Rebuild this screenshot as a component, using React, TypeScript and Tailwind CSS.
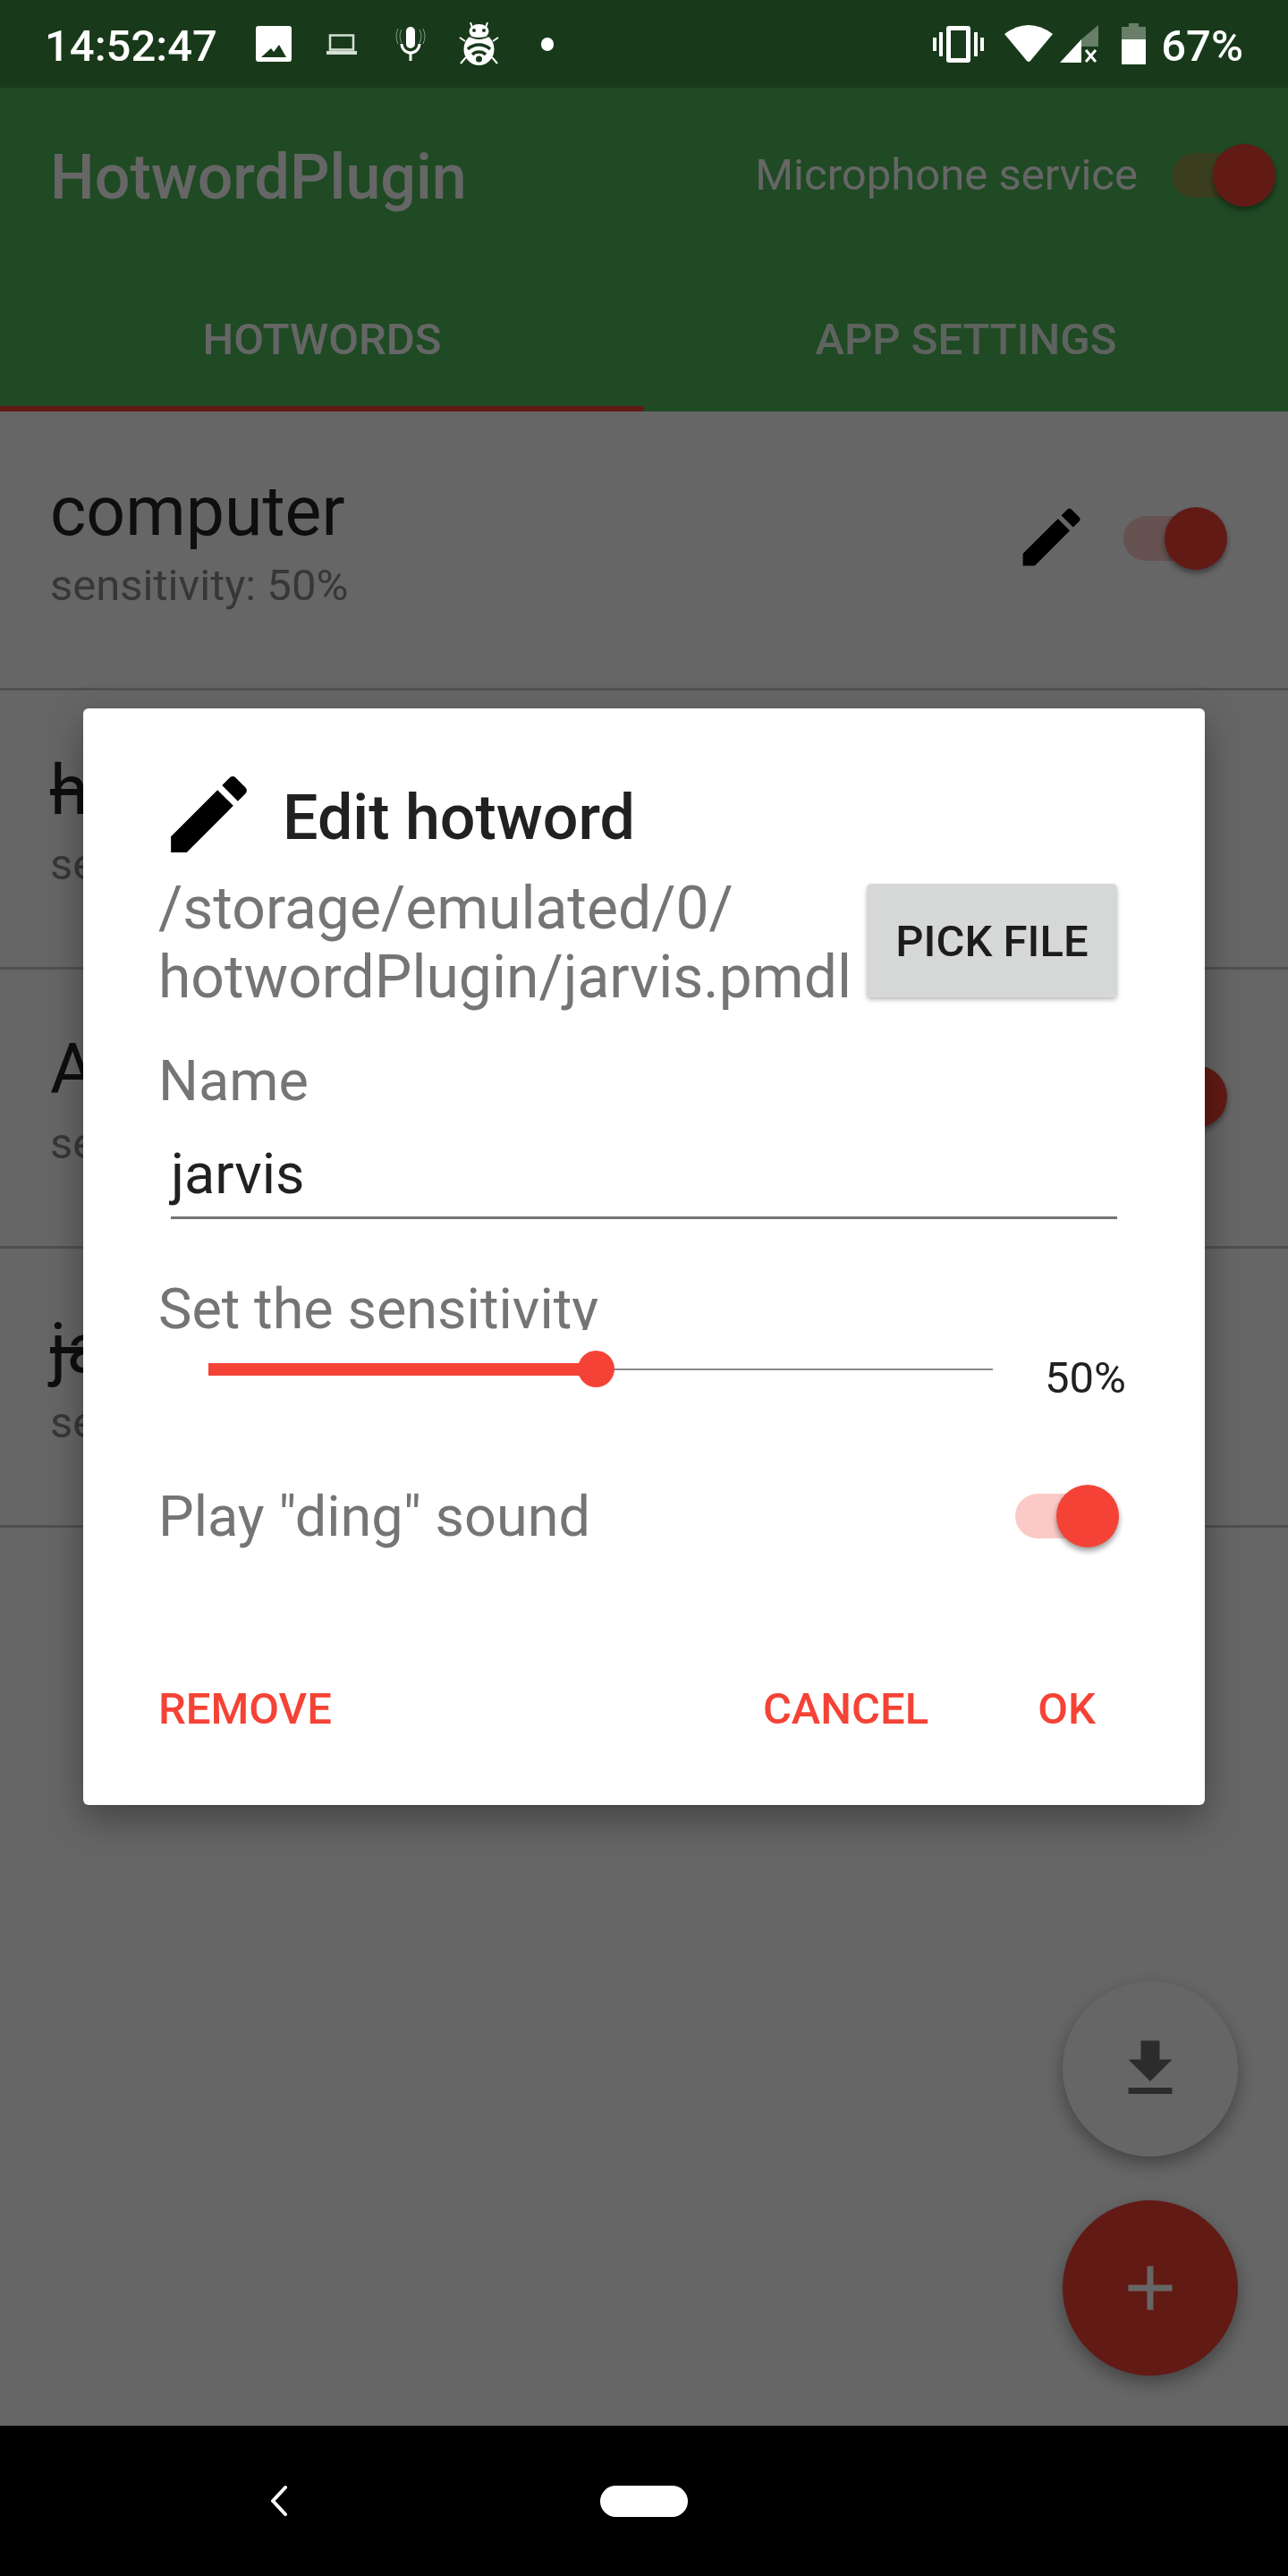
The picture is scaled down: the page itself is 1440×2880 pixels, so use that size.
import React from "react";

const font = { fontFamily: "Roboto, sans-serif" };

function Pencil({ className }: { className?: string }) {
  return (
    <svg viewBox="0 0 24 24" className={className} fill="currentColor">
      <path d="M3 17.25V21h3.75L17.81 9.94l-3.75-3.75L3 17.25zM20.71 7.04a1 1 0 0 0 0-1.41l-2.34-2.34a1 1 0 0 0-1.41 0l-1.83 1.83 3.75 3.75 1.83-1.83z" />
    </svg>
  );
}

function Toggle({ track, thumb, className }: { track: string; thumb: string; className?: string }) {
  return (
    <div className={`relative w-[116px] h-[70px] shrink-0 ${className ?? ""}`}>
      <div className={`absolute left-0 top-[10px] w-[90px] h-[50px] rounded-full ${track}`} />
      <div className={`absolute left-[46px] top-0 w-[70px] h-[70px] rounded-full shadow-[0_4px_6px_rgba(0,0,0,0.4)] ${thumb}`} />
    </div>
  );
}

function Row({ name, struck, on }: { name: string; struck?: boolean; on?: boolean }) {
  return (
    <div className="h-[312px] shrink-0 border-b-[3px] border-[#c8c8c8] flex items-start justify-between pl-[56px] pr-[68px]">
      <div className="pt-[67px]">
        <div className={`text-[77px] leading-[90px] text-[#252525] ${struck ? "line-through" : ""}`}>{name}</div>
        <div className="text-[49px] leading-[60px] mt-[8px] text-[#8a8a8a]">sensitivity: 50%</div>
      </div>
      <div className="flex items-center gap-[38px] pt-[98px]">
        <Pencil className="w-[85px] h-[85px] text-black" />
        {on ? <Toggle track="bg-[#fccdca]" thumb="bg-[#f44336]" className="mt-[2px]" /> : <div className="w-[116px]" />}
      </div>
    </div>
  );
}

export default function App() {
  return (
    <div className="relative w-[1440px] h-[2880px] flex flex-col overflow-hidden bg-white" style={font}>
      <div className="h-[98px] shrink-0 bg-[#183a1a] text-white flex items-center pl-[50px] pr-[50px] relative z-20">
        <span className="text-[49px] font-medium pt-[6px]">14:52:47</span>
        <svg viewBox="0 0 40 40" className="w-[40px] h-[40px] ml-[43px]" fill="#fff"><path fillRule="evenodd" d="M3 0h34a3 3 0 0 1 3 3v34a3 3 0 0 1-3 3H3a3 3 0 0 1-3-3V3a3 3 0 0 1 3-3zM6 35h28L26 21l-6 8-3-4z" /></svg>
        <svg viewBox="0 0 34 23" className="w-[34px] h-[23px] ml-[39px]" fill="none" stroke="#d5e0d5" strokeWidth="2.5"><rect x="4" y="1.5" width="26" height="16" /><path d="M0 21h34" strokeWidth="4" /></svg>
        <svg viewBox="0 0 34 38" className="w-[34px] h-[38px] ml-[43px]" fill="none" stroke="#fff"><rect x="12" y="0" width="10" height="24" rx="5" fill="#fff" stroke="none" /><path d="M7 19a10 10 0 0 0 20 0M17 30v8" strokeWidth="3" /><path d="M7 3a16 16 0 0 0 0 15M27 3a16 16 0 0 1 0 15M3 2a20 20 0 0 0 0 17M31 2a20 20 0 0 1 0 17" strokeWidth="0.8" opacity="0.6" /></svg>
        <svg viewBox="0 0 47 48" className="w-[47px] h-[48px] ml-[36px]"><g stroke="#fff" strokeWidth="2"><path d="M16 6l-2-6M31 6l2-6M8 21l-6-4M39 21l6-4M9 39l-6 7M38 39l6 7" /></g><ellipse cx="23.5" cy="30" rx="17" ry="18" fill="#fff" /><ellipse cx="23.5" cy="10" rx="11" ry="8" fill="#fff" /><circle cx="18" cy="9" r="2" fill="#183a1a" /><circle cx="29" cy="9" r="2" fill="#183a1a" /><path d="M10 14q13.5 8 27 0" stroke="#183a1a" strokeWidth="2" fill="none" /><path d="M11 30a18 18 0 0 1 25 0M16 36a11 11 0 0 1 15 0" stroke="#183a1a" strokeWidth="3.5" fill="none" /><circle cx="23.5" cy="41" r="3.5" fill="#183a1a" /></svg>
        <div className="w-[14px] h-[15px] rounded-full bg-white ml-[46px]" />
        <svg viewBox="0 0 57 41" className="w-[57px] h-[41px] ml-auto" fill="#fff"><path fillRule="evenodd" d="M18 0h21a3 3 0 0 1 3 3v35a3 3 0 0 1-3 3H18a3 3 0 0 1-3-3V3a3 3 0 0 1 3-3zm2 5v31h17V5z" /><rect x="7" y="7" width="4" height="27" /><rect x="46" y="7" width="4" height="27" /><rect x="0" y="13" width="4" height="15" /><rect x="53" y="13" width="4" height="15" /></svg>
        <svg viewBox="0 0 54 42" className="w-[54px] h-[42px] ml-[23px]" fill="#fff"><path d="M0 10Q27-10 54 10L29 40q-2 2-4 0z" /></svg>
        <svg viewBox="0 0 43 42" className="w-[43px] h-[42px] ml-[8px]"><path d="M24 16L43 0v24H24z" fill="#fff" opacity="0.35" /><path d="M24 16v26H0z" fill="#fff" /><path d="M29 28l11 13M40 28L29 41" stroke="#fff" strokeWidth="3" /></svg>
        <svg viewBox="0 0 27 46" className="w-[27px] h-[46px] ml-[26px]"><path d="M8 0h11v4h8v14H0V4h8z" fill="#fff" opacity="0.35" /><path d="M0 18h27v28H0z" fill="#fff" /></svg>
        <span className="text-[49px] font-medium pt-[6px] ml-[17px]">67%</span>
      </div>

      <div className="flex-1 flex flex-col min-h-0">
        <div className="bg-[#4eb85a] shrink-0">
          <div className="h-[196px] flex items-center justify-between pl-[56px] pr-[14px] text-white">
            <div className="text-[70px] font-medium pt-[4px]">HotwordPlugin</div>
            <div className="flex items-center gap-[38px]">
              <span className="text-[49px]">Microphone service</span>
              <Toggle track="bg-[#929a4c]" thumb="bg-[#f44336]" />
            </div>
          </div>
          <div className="flex h-[166px]">
            <div className="w-[720px] flex items-center justify-center border-b-[6px] border-[#f44336] text-[49px] font-medium text-white pt-[12px]">HOTWORDS</div>
            <div className="w-[720px] flex items-center justify-center border-b-[6px] border-transparent text-[49px] font-medium text-white/90 pt-[12px]">APP SETTINGS</div>
          </div>
        </div>
        <div className="flex flex-col">
          <Row name="computer" on />
          <Row name="hotword" struck />
          <Row name="Alexa" on />
          <Row name="jarvis" struck />
        </div>
      </div>

      <div className="absolute right-[56px] top-[2215px] w-[196px] h-[196px] rounded-full bg-white shadow-[0_8px_20px_rgba(0,0,0,0.35)] flex items-center justify-center">
        <svg viewBox="0 0 24 24" className="w-[84px] h-[84px] text-[#6e6e6e]" fill="currentColor"><path d="M19 9h-4V3H9v6H5l7 7 7-7zM5 18v2h14v-2H5z" /></svg>
      </div>
      <div className="absolute right-[56px] top-[2460px] w-[196px] h-[196px] rounded-full bg-[#f44336] shadow-[0_8px_20px_rgba(0,0,0,0.35)] flex items-center justify-center">
        <svg viewBox="0 0 24 24" className="w-[84px] h-[84px] text-white" fill="currentColor"><path d="M19 13h-6v6h-2v-6H5v-2h6V5h2v6h6v2z" /></svg>
      </div>

      <div className="absolute left-0 right-0 top-[98px] bottom-[168px] bg-black/60" />

      <div className="h-[168px] shrink-0 bg-black flex items-center relative z-20">
        <svg viewBox="0 0 24 40" className="w-[24px] h-[40px] ml-[300px]" fill="none" stroke="#fff" strokeWidth="4" strokeLinecap="round" strokeLinejoin="round"><path d="M19 5L5 20l14 15" /></svg>
        <div className="w-[98px] h-[35px] rounded-full bg-white ml-[347px]" />
      </div>

      <div className="absolute left-[93px] top-[792px] w-[1254px] h-[1226px] rounded-[6px] bg-white shadow-[0_16px_40px_rgba(0,0,0,0.35)] pl-[84px] pr-[98px] pt-[62px]">
        <div className="flex items-center h-[113px]">
          <Pencil className="w-[113px] h-[113px] shrink-0 text-black" />
          <div className="text-[70px] font-medium text-[#212121] ml-[26px] pt-[8px]">Edit hotword</div>
        </div>
        <div className="flex items-start justify-between mt-[10px]">
          <div className="text-[66px] leading-[77px] text-[#757575] whitespace-nowrap">/storage/emulated/0/<br />hotwordPlugin/jarvis.pmdl</div>
          <div className="w-[280px] h-[127px] mt-[11px] shrink-0 rounded-[5px] bg-[#d6d7d7] shadow-[0_3px_5px_rgba(0,0,0,0.25)] flex items-center justify-center text-[49px] font-medium text-[#1c1c1c] pt-[2px]">PICK FILE</div>
        </div>
        <div className="text-[63px] leading-[74px] text-[#757575] mt-[41px]">Name</div>
        <div className="ml-[14px] h-[87px] border-b-[3px] border-[#757575] text-[63px] leading-[74px] text-[#212121] mt-[30px]">jarvis</div>
        <div className="h-[60px] overflow-hidden text-[63px] leading-[74px] text-[#757575] mt-[64px]">Set the sensitivity</div>
        <div className="flex items-start h-[60px] mt-[23px]">
          <div className="relative ml-[56px] w-[877px] h-[41px] shrink-0">
            <div className="absolute left-0 right-0 top-[20px] h-[2px] bg-[#8a8a8a]" />
            <div className="absolute left-0 w-[430px] top-[14px] h-[14px] bg-[#f44336]" />
            <div className="absolute left-[413px] top-0 w-[41px] h-[41px] rounded-full bg-[#f44336]" />
          </div>
          <div className="text-[49px] text-[#212121] ml-[58px] -mt-[6px] whitespace-nowrap">50%</div>
        </div>
        <div className="flex items-center justify-between h-[74px] mt-[88px]">
          <div className="text-[63px] leading-[74px] text-[#757575] pt-[2px]">Play "ding" sound</div>
          <Toggle track="bg-[#fbcac7]" thumb="bg-[#f44336]" className="-mr-[2px]" />
        </div>
        <div className="flex items-center mt-[142px] text-[49px] font-medium text-[#f44336]">
          <span>REMOVE</span>
          <span className="ml-auto -mr-[1px]">CANCEL</span>
          <span className="ml-[123px] mr-[24px]">OK</span>
        </div>
      </div>
    </div>
  );
}
